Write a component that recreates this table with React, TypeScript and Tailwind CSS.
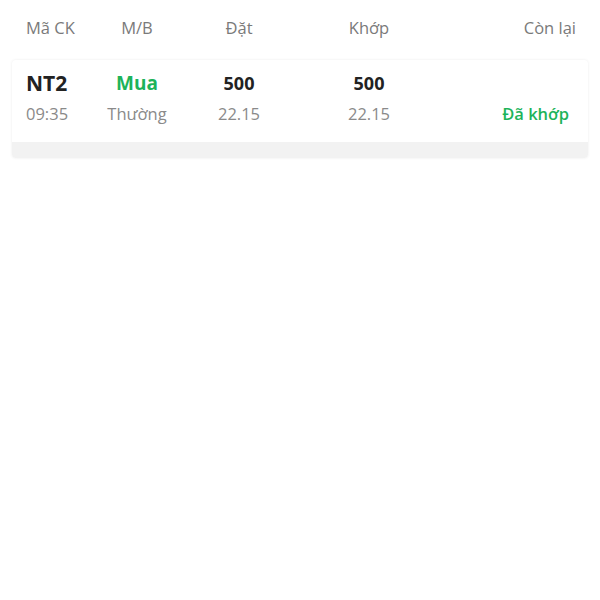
const ROW = {
  code: 'NT2',
  time: '09:35',
  side: 'Mua',
  type: 'Thường',
  qty: 500,
  price: '22.15',
  matchQty: 500,
  matchPrice: '22.15',
  status: 'Đã khớp',
};

export default function App() {
  const font = { fontFamily: '"Open Sans", "Noto Sans", sans-serif' };
  return (
    <div className="w-[600px] h-[600px] bg-white" style={font}>
      {/* header */}
      <div className="grid grid-cols-[72px_78px_126px_134px_140px] pl-[26px] pt-[17px] text-[16.5px] leading-[22px] text-[#7a7a7a]">
        <div>Mã CK</div>
        <div className="text-center">M/B</div>
        <div className="text-center">Đặt</div>
        <div className="text-center">Khớp</div>
        <div className="text-right">Còn lại</div>
      </div>

      {/* order card */}
      <div className="mx-[12px] mt-[21px] rounded-[4px] bg-white shadow-[0_0_3px_rgba(0,0,0,0.08)] overflow-hidden">
        <div className="grid grid-cols-[72px_78px_126px_134px_140px] pl-[14px] pt-[10px] pb-[17px]">
          <div className="text-[21px] leading-[26px] font-bold text-[#222]">{ROW.code}</div>
          <div className="text-center text-[19px] leading-[26px] font-bold text-[#1db35a]">{ROW.side}</div>
          <div className="text-center text-[18px] leading-[26px] font-bold text-[#222]">{ROW.qty}</div>
          <div className="text-center text-[18px] leading-[26px] font-bold text-[#222]">{ROW.matchQty}</div>
          <div />
          <div className="mt-[7px] text-[16.5px] leading-[22px] text-[#8a8a8a]">{ROW.time}</div>
          <div className="mt-[7px] text-center text-[16.5px] leading-[22px] text-[#8a8a8a]">{ROW.type}</div>
          <div className="mt-[7px] text-center text-[16.5px] leading-[22px] text-[#8a8a8a]">{ROW.price}</div>
          <div className="mt-[7px] text-center text-[16.5px] leading-[22px] text-[#8a8a8a]">{ROW.matchPrice}</div>
          <div className="mt-[7px] text-right pr-[7px] text-[16.5px] leading-[22px] font-semibold text-[#1db35a]">{ROW.status}</div>
        </div>
        <div className="h-[16px] bg-[#f2f2f2]" />
      </div>
    </div>
  );
}
